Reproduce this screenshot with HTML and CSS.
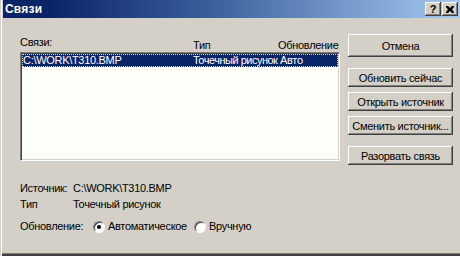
FILE: index.html
```html
<!DOCTYPE html>
<html lang="ru">
<head>
<meta charset="utf-8">
<link rel="stylesheet" href="styles.css">
</head>
<body>
<div class="window">
  <div class="titlebar">
    <span class="title">Связи</span>
    <div class="tbtns">
      <span class="tbtn help">?</span>
      <span class="tbtn close">
        <svg width="8" height="7" viewBox="0 0 8 7"><path d="M0 0h2l2 2 2-2h2v1L6 3.5 8 6v1H6L4 5 2 7H0V6l2-2.5L0 1z" fill="#000"/></svg>
      </span>
    </div>
  </div>
  <div class="main">
    <div class="leftcol">
      <div class="header">
        <span class="h-name">Связи:</span>
        <span class="h-type">Тип</span>
        <span class="h-upd">Обновление</span>
      </div>
      <div class="listbox">
        <div class="row selected">
          <span class="c-name">C:\WORK\T310.BMP</span>
          <span class="c-type">Точечный рисунок</span>
          <span class="c-upd">Авто</span>
        </div>
      </div>
      <div class="info">
        <span class="lbl">Источник:</span><span class="val">C:\WORK\T310.BMP</span>
        <span class="lbl">Тип</span><span class="val">Точечный рисунок</span>
        <span class="lbl upd">Обновление:</span>
        <span class="val upd radios">
          <span class="radio"><span class="circle checked"></span>Автоматическое</span>
          <span class="radio"><span class="circle"></span>Вручную</span>
        </span>
      </div>
    </div>
    <div class="rightcol">
      <button class="btn cancel">Отмена</button>
      <button class="btn first">Обновить сейчас</button>
      <button class="btn">Открыть источник</button>
      <button class="btn">Сменить источник...</button>
      <button class="btn last">Разорвать связь</button>
    </div>
  </div>
</div>
</body>
</html>
```
FILE: styles.css
```css
html, body {
  margin: 0;
  padding: 0;
  background: #d4d0c8;
}
.window {
  width: 460px;
  height: 256px;
  box-sizing: border-box;
  background: #d4d0c8;
  padding-left: 3px;
  box-shadow: inset 1px 0 #d4d0c8, inset 2px 0 #ffffff, inset 0 -1px #404040, inset 0 -2px #404040, inset 0 -3px #808080;
  font-family: "Liberation Sans", Arial, sans-serif;
  font-size: 11px;
  letter-spacing: -0.3px;
  color: #000;
  overflow: hidden;
}
.titlebar {
  height: 18px;
  display: flex;
  align-items: center;
  justify-content: space-between;
  background: linear-gradient(to right, #0a246a 0%, #0a246a 10%, #3a5e9c 45%, #a6caf0 100%);
  padding-left: 2px;
}
.title {
  color: #fff;
  font-weight: bold;
  font-size: 12px;
  letter-spacing: 0.2px;
}
.tbtns {
  display: flex;
  gap: 1px;
  margin-right: 2px;
}
.tbtn {
  width: 16px;
  height: 14px;
  box-sizing: border-box;
  background: #d4d0c8;
  box-shadow: inset -1px -1px #404040, inset 1px 1px #ffffff, inset -2px -2px #808080;
  display: flex;
  align-items: center;
  justify-content: center;
  font-weight: bold;
  font-size: 11px;
  line-height: 14px;
  letter-spacing: 0;
}
.main {
  display: flex;
  padding: 16px 0 0 17px;
}
.leftcol {
  width: 320px;
  display: flex;
  flex-direction: column;
}
.header {
  height: 18px;
  display: grid;
  grid-template-columns: 173px 85px 1fr;
}
.h-name {
  padding-top: 2px;
}
.h-type, .h-upd {
  padding-top: 5px;
}
.listbox {
  height: 109px;
  box-sizing: border-box;
  background: #fcfefa;
  border-style: solid;
  border-width: 1px;
  border-color: #808080 #ffffff #ffffff #808080;
  box-shadow: inset 1px 1px #404040, inset -1px -1px #d4d0c8;
  padding: 1px 1px 0 1px;
}
.row {
  height: 13px;
  display: grid;
  grid-template-columns: 171px 87px 1fr;
  line-height: 13px;
  white-space: nowrap;
  overflow: hidden;
}
.row.selected {
  background: #0a246a;
  color: #fff;
  outline: 1px dotted #f0e0a0;
  outline-offset: -1px;
}
.c-name {
  padding-left: 1px;
}
.c-type {
  letter-spacing: -0.5px;
}
.info {
  display: grid;
  grid-template-columns: 53px 1fr;
  row-gap: 3px;
  margin-top: 21px;
  line-height: 13px;
}
.info .upd {
  margin-top: 6px;
}
.radios {
  display: grid;
  grid-template-columns: 101px auto;
  justify-content: start;
  padding-left: 20px;
}
.radio {
  display: flex;
  align-items: center;
  gap: 3px;
}
.circle {
  width: 12px;
  height: 12px;
  box-sizing: border-box;
  border-radius: 50%;
  background: #fff;
  border: 1px solid;
  border-color: #808080 #ffffff #ffffff #808080;
  box-shadow: inset 1px 1px #404040;
  position: relative;
}
.circle.checked::after {
  content: "";
  position: absolute;
  left: 3px;
  top: 3px;
  width: 4px;
  height: 4px;
  border-radius: 50%;
  background: #000;
}
.rightcol {
  margin-left: 8px;
  width: 105px;
  display: flex;
  flex-direction: column;
}
.btn {
  font-family: "Liberation Sans", Arial, sans-serif;
  font-size: 11px;
  letter-spacing: -0.3px;
  color: #000;
  background: #d4d0c8;
  border: none;
  height: 19px;
  padding: 0;
  margin: 0 0 5px 0;
  box-shadow: inset -1px -1px #404040, inset 1px 1px #ffffff, inset -2px -2px #808080;
}
.btn.cancel {
  height: 23px;
  margin-bottom: 11px;
}
.btn.last {
  margin-top: 6px;
}
```
